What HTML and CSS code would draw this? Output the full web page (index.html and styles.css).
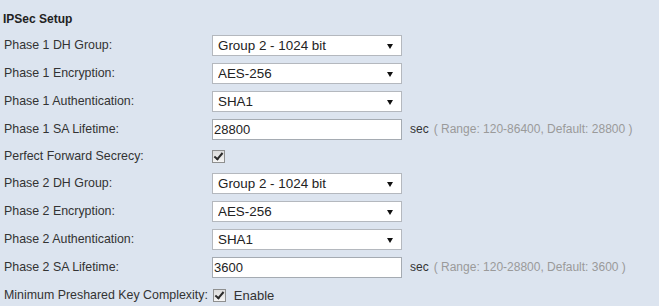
FILE: index.html
```html
<!DOCTYPE html>
<html lang="en">
<head>
    <meta charset="UTF-8">
    <title>IPSec Setup</title>
    <link rel="stylesheet" href="styles.css">
</head>
<body>
    <div class="panel">
        <h3 class="title">IPSec Setup</h3>
        <div class="form">
            <div class="row">
                <label>Phase 1 DH Group:</label>
                <div class="select-wrap">
                    <select><option>Group 2 - 1024 bit</option></select>
                    <span class="arrow"></span>
                </div>
            </div>
            <div class="row">
                <label>Phase 1 Encryption:</label>
                <div class="select-wrap">
                    <select><option>AES-256</option></select>
                    <span class="arrow"></span>
                </div>
            </div>
            <div class="row">
                <label>Phase 1 Authentication:</label>
                <div class="select-wrap">
                    <select><option>SHA1</option></select>
                    <span class="arrow"></span>
                </div>
            </div>
            <div class="row">
                <label>Phase 1 SA Lifetime:</label>
                <input type="text" class="text" value="28800">
                <span class="unit">sec</span>
                <span class="hint">( Range: 120-86400, Default: 28800 )</span>
            </div>
            <div class="row short">
                <label>Perfect Forward Secrecy:</label>
                <input type="checkbox" class="check" checked>
            </div>
            <div class="row">
                <label>Phase 2 DH Group:</label>
                <div class="select-wrap">
                    <select><option>Group 2 - 1024 bit</option></select>
                    <span class="arrow"></span>
                </div>
            </div>
            <div class="row">
                <label>Phase 2 Encryption:</label>
                <div class="select-wrap">
                    <select><option>AES-256</option></select>
                    <span class="arrow"></span>
                </div>
            </div>
            <div class="row">
                <label>Phase 2 Authentication:</label>
                <div class="select-wrap">
                    <select><option>SHA1</option></select>
                    <span class="arrow"></span>
                </div>
            </div>
            <div class="row">
                <label>Phase 2 SA Lifetime:</label>
                <input type="text" class="text" value="3600">
                <span class="unit">sec</span>
                <span class="hint">( Range: 120-28800, Default: 3600 )</span>
            </div>
            <div class="row">
                <label class="auto">Minimum Preshared Key Complexity:</label>
                <input type="checkbox" class="check" checked>
                <span class="enable">Enable</span>
            </div>
        </div>
    </div>
</body>
</html>
```

FILE: styles.css
```css
body {
    margin: 0;
    background-color: #dce4ef;
    font-family: 'Liberation Sans', Arial, sans-serif;
    font-size: 12px;
    color: #333333;
}
.panel {
    padding: 12px 0 0 4px;
    height: 306px;
    box-sizing: border-box;
    overflow: hidden;
}
.title {
    margin: 0 0 0 -1px;
    font-size: 12px;
    font-weight: bold;
    color: #222222;
    line-height: 14px;
}
.form {
    margin-top: 5px;
}
.row {
    display: flex;
    align-items: center;
    height: 28px;
}
.row.short {
    height: 26px;
}
.row label {
    width: 208px;
    flex-shrink: 0;
    font-size: 12.4px;
}
.row label.auto {
    width: auto;
    margin-right: 5px;
}
.select-wrap {
    position: relative;
    width: 190px;
    height: 21px;
}
.select-wrap select {
    appearance: none;
    -webkit-appearance: none;
    width: 100%;
    height: 100%;
    margin: 0;
    padding: 0 0 0 5px;
    border: 1px solid #b4b8be;
    background: #ffffff;
    font-family: inherit;
    font-size: 13.4px;
    color: #222222;
    border-radius: 0;
}
.arrow {
    position: absolute;
    right: 9px;
    top: 9px;
    width: 0;
    height: 0;
    border-left: 3px solid transparent;
    border-right: 3px solid transparent;
    border-top: 5px solid #111111;
}
.text {
    width: 190px;
    height: 21px;
    box-sizing: border-box;
    margin: 0;
    padding: 0 1px;
    border: 1px solid #a5abb2;
    background: #ffffff;
    font-family: inherit;
    font-size: 13px;
    color: #222222;
}
.unit {
    margin-left: 8px;
    color: #333333;
}
.hint {
    margin-left: 5px;
    color: #9a9a9a;
}
.check {
    appearance: none;
    -webkit-appearance: none;
    position: relative;
    width: 13px;
    height: 13px;
    margin: 0;
    border: 1px solid #8e8f8f;
    background: linear-gradient(#dcdcdc, #f4f4f4);
}
.check:checked::after {
    content: "";
    position: absolute;
    left: 3px;
    top: 0px;
    width: 3px;
    height: 7px;
    border-right: 2px solid #2a2a2a;
    border-bottom: 2px solid #2a2a2a;
    transform: rotate(40deg);
}
.enable {
    margin-left: 8px;
    font-size: 13px;
}
```
